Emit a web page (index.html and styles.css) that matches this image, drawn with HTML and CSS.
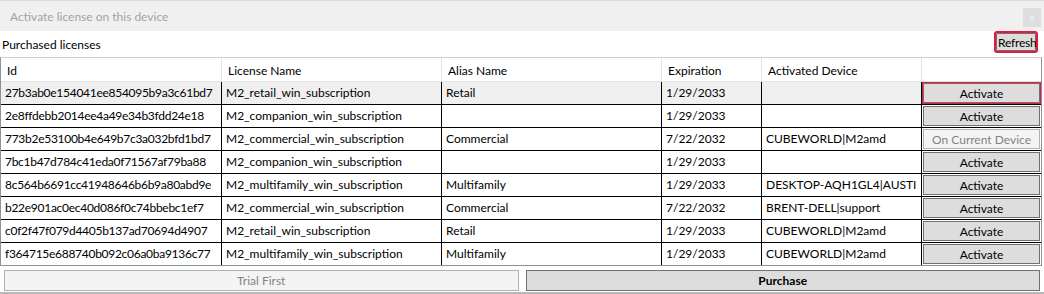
FILE: index.html
```html
<!DOCTYPE html>
<html>
<head>
<meta charset="utf-8">
<link rel="stylesheet" href="styles.css">
</head>
<body>
<div class="window">
  <div class="titlebar">
    <span class="title">Activate license on this device</span>
    <span class="close">x</span>
  </div>
  <div class="toolbar">
    <span class="label">Purchased licenses</span>
    <span class="hl"><button class="btn refresh">Refresh</button></span>
  </div>
  <div class="grid">
    <div class="row head">
      <div class="c">Id</div>
      <div class="c">License Name</div>
      <div class="c">Alias Name</div>
      <div class="c">Expiration</div>
      <div class="c">Activated Device</div>
      <div class="c"></div>
    </div>
    <div class="row sel">
      <div class="c id">27b3ab0e154041ee854095b9a3c61bd7</div>
      <div class="c">M2_retail_win_subscription</div>
      <div class="c">Retail</div>
      <div class="c">1/29/2033</div>
      <div class="c"></div>
      <div class="c act"><button class="btn focus">Activate</button></div>
    </div>
    <div class="row">
      <div class="c id">2e8ffdebb2014ee4a49e34b3fdd24e18</div>
      <div class="c">M2_companion_win_subscription</div>
      <div class="c"></div>
      <div class="c">1/29/2033</div>
      <div class="c"></div>
      <div class="c act"><button class="btn">Activate</button></div>
    </div>
    <div class="row">
      <div class="c id">773b2e53100b4e649b7c3a032bfd1bd7</div>
      <div class="c">M2_commercial_win_subscription</div>
      <div class="c">Commercial</div>
      <div class="c">7/22/2032</div>
      <div class="c">CUBEWORLD|M2amd</div>
      <div class="c act"><button class="btn disabled">On Current Device</button></div>
    </div>
    <div class="row">
      <div class="c id">7bc1b47d784c41eda0f71567af79ba88</div>
      <div class="c">M2_companion_win_subscription</div>
      <div class="c"></div>
      <div class="c">1/29/2033</div>
      <div class="c"></div>
      <div class="c act"><button class="btn">Activate</button></div>
    </div>
    <div class="row">
      <div class="c id">8c564b6691cc41948646b6b9a80abd9e</div>
      <div class="c">M2_multifamily_win_subscription</div>
      <div class="c">Multifamily</div>
      <div class="c">1/29/2033</div>
      <div class="c">DESKTOP-AQH1GL4|AUSTI</div>
      <div class="c act"><button class="btn">Activate</button></div>
    </div>
    <div class="row">
      <div class="c id">b22e901ac0ec40d086f0c74bbebc1ef7</div>
      <div class="c">M2_commercial_win_subscription</div>
      <div class="c">Commercial</div>
      <div class="c">7/22/2032</div>
      <div class="c">BRENT-DELL|support</div>
      <div class="c act"><button class="btn">Activate</button></div>
    </div>
    <div class="row">
      <div class="c id">c0f2f47f079d4405b137ad70694d4907</div>
      <div class="c">M2_retail_win_subscription</div>
      <div class="c">Retail</div>
      <div class="c">1/29/2033</div>
      <div class="c">CUBEWORLD|M2amd</div>
      <div class="c act"><button class="btn">Activate</button></div>
    </div>
    <div class="row last">
      <div class="c id">f364715e688740b092c06a0ba9136c77</div>
      <div class="c">M2_multifamily_win_subscription</div>
      <div class="c">Multifamily</div>
      <div class="c">1/29/2033</div>
      <div class="c">CUBEWORLD|M2amd</div>
      <div class="c act"><button class="btn">Activate</button></div>
    </div>
  </div>
  <div class="footer">
    <button class="btn disabled wide">Trial First</button>
    <button class="btn wide bold">Purchase</button>
  </div>
  <div class="strip"></div>
</div>
</body>
</html>
```

FILE: styles.css
```css
* { box-sizing: border-box; }
html, body { margin: 0; padding: 0; background: #ffffff; }
body {
  font-family: "Lato", "Noto Sans", sans-serif;
  font-size: 12px;
  color: #000;
  width: 1044px;
  height: 294px;
  overflow: hidden;
}
.window { width: 1044px; height: 294px; display: flex; flex-direction: column; }

.titlebar {
  height: 31px;
  background: #f0f0f0;
  border-top: 1px solid #dcdcdc;
  display: flex;
  align-items: center;
  justify-content: space-between;
  padding: 0 3px 0 10px;
}
.title { color: #a3a3a3; font-size: 12px; }
.close {
  width: 18px;
  height: 19px;
  background: #dedede;
  color: #f6f6f6;
  font-size: 10px;
  line-height: 18px;
  text-align: center;
  margin-top: 2px;
}

.toolbar {
  height: 26px;
  display: flex;
  justify-content: space-between;
  align-items: center;
  padding: 0 6px 0 2px;
}
.hl {
  align-self: flex-start;
  display: inline-flex;
  border: 2px solid #e3193f;
  border-radius: 3px;
  height: 22px;
  width: 44px;
  overflow: hidden;
}

.btn {
  font-family: "Lato", "Noto Sans", sans-serif;
  font-size: 12px;
  color: #000;
  background: #dddddd;
  border: 1px solid #707070;
  padding: 0;
  margin: 0;
  white-space: nowrap;
  overflow: hidden;
  display: flex;
  align-items: center;
  justify-content: center;
}
.refresh {
  width: 100%;
  height: 18px;
  justify-content: flex-start;
  padding-left: 1px;
  letter-spacing: -0.2px;
  overflow: visible;
}
.btn.disabled { background: #f4f4f4; border-color: #adb2b5; color: #838383; }
.btn.bold { font-weight: bold; }

.grid {
  width: 1042px;
  border: 1px solid #8a929c;
  border-top-color: #c9d0d6;
}
.row {
  display: grid;
  grid-template-columns: 221px 220px 220px 100px 160px 119px;
  height: 23px;
  border-bottom: 1px solid #000;
}
.row.last { height: 22px; border-bottom: none; }
.row.head { height: 24px; border-bottom: 1px solid #e3e3e3; }
.row.sel { background: #f0f0f0; }
.c {
  border-right: 1px solid #000;
  display: flex;
  align-items: center;
  padding-left: 4px;
  padding-bottom: 1px;
  white-space: nowrap;
  overflow: hidden;
}
.c.id { letter-spacing: -0.28px; }
.c:last-child { border-right: none; }
.head .c { border-right-color: #e3e3e3; padding-left: 6px; padding-top: 1px; padding-bottom: 0; }
.c.act { padding: 1px 1px; }
.c.act .btn { width: 100%; height: 20px; }
.btn.focus { outline: 2px solid #e3193f; outline-offset: 0; border-radius: 2px; }

.footer {
  height: 26px;
  display: flex;
  gap: 7px;
  padding: 4px 4px 1px 4px;
}
.footer .wide { flex: 1; height: 21px; }
.strip { height: 2px; background: #b8b8b8; }
```
